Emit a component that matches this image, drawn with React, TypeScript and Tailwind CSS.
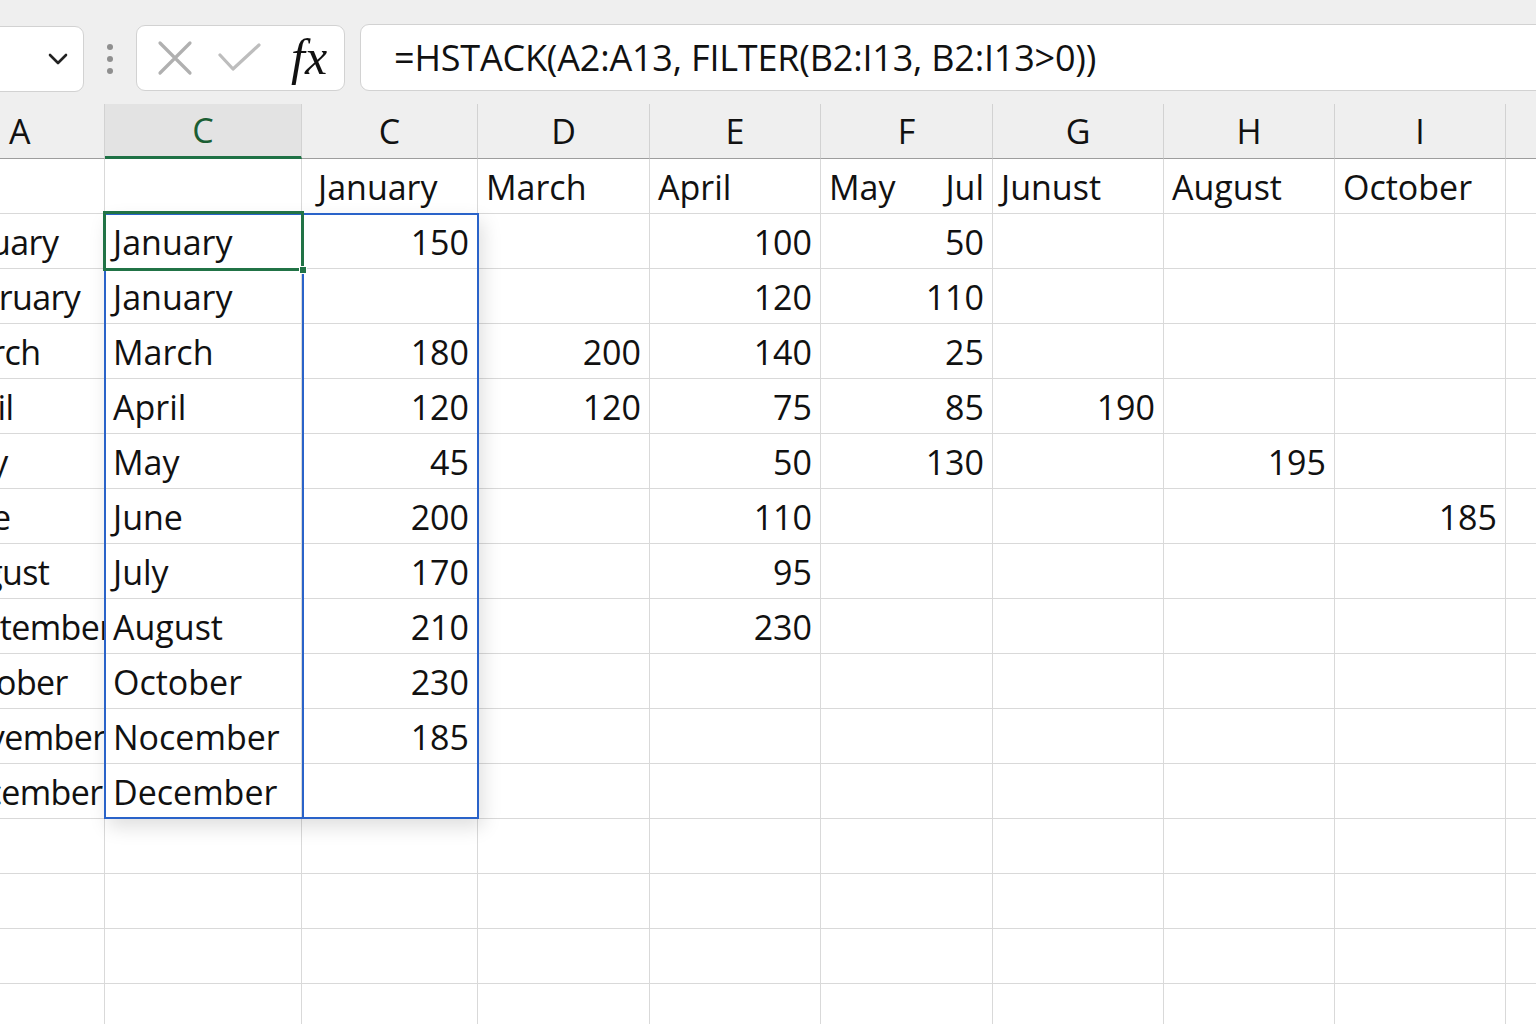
import React from "react";

// column layout: A is scrolled partly off-screen
const colWidths = "grid-cols-[169px_197px_176px_172px_171px_172px_171px_171px_171px_171px]";
const headers = ["A", "C", "C", "D", "E", "F", "G", "H", "I", ""];

const colA = ["", "January", "February", "March", "April", "May", "June", "August", "September", "October", "November", "December", "", "", "", ""];
const colC1 = ["", "January", "January", "March", "April", "May", "June", "July", "August", "October", "Nocember", "December", "", "", "", ""];

// values for columns C..I (index 0..6) per row, starting at row 2
const values: (number | null)[][] = [
  [150, null, 100, 50, null, null, null],
  [null, null, 120, 110, null, null, null],
  [180, 200, 140, 25, null, null, null],
  [120, 120, 75, 85, 190, null, null],
  [45, null, 50, 130, null, 195, null],
  [200, null, 110, null, null, null, 185],
  [170, null, 95, null, null, null, null],
  [210, null, 230, null, null, null, null],
  [230, null, null, null, null, null, null],
  [185, null, null, null, null, null, null],
  [null, null, null, null, null, null, null],
];

const row1 = ["January", "March", "April", "May", "Junust", "August", "October", ""];

const cell = "h-[55px] border-r border-b border-[#d9d9d9] overflow-hidden whitespace-nowrap flex items-center pt-[2px]";

function Toolbar() {
  return (
    <div className="h-[104px] bg-[#efefef] flex items-start pt-[24px] gap-0">
      {/* name box */}
      <div className="ml-[-16px] w-[100px] h-[66px] mt-[2px] bg-white border border-[#d2d2d2] rounded-[9px] flex items-center justify-end pr-[14px]">
        <svg width="22" height="14" viewBox="0 0 22 14">
          <path d="M3 3 L11 11 L19 3" fill="none" stroke="#222" strokeWidth="2.6" strokeLinecap="round" strokeLinejoin="round" />
        </svg>
      </div>
      <div className="w-[52px] h-[70px] flex flex-col items-center justify-center gap-[6px]">
        <span className="w-[6px] h-[6px] rounded-full bg-[#8f8f8f]" />
        <span className="w-[6px] h-[6px] rounded-full bg-[#8f8f8f]" />
        <span className="w-[6px] h-[6px] rounded-full bg-[#8f8f8f]" />
      </div>
      {/* cancel / enter / fx */}
      <div className="w-[209px] h-[66px] mt-[1px] bg-white border border-[#d2d2d2] rounded-[9px] flex items-center pl-[20px]">
        <svg width="36" height="36" viewBox="0 0 36 36">
          <path d="M3 3 L33 33 M33 3 L3 33" stroke="#b0b0b0" strokeWidth="3.2" strokeLinecap="round" />
        </svg>
        <svg width="46" height="32" viewBox="0 0 46 32" className="ml-[24px]">
          <path d="M3 13 L16 27 L42 3" fill="none" stroke="#bdbdbd" strokeWidth="3.2" strokeLinecap="round" strokeLinejoin="round" />
        </svg>
        <span className="ml-[28px] mb-[2px] font-['Liberation_Serif',serif] italic text-[50px] leading-none text-[#111]">fx</span>
      </div>
      {/* formula input */}
      <div className="ml-[15px] flex-1 mr-[-20px] h-[67px] bg-white border border-[#d2d2d2] rounded-[9px] flex items-center pl-[33px]">
        <span className="text-[36px] tracking-[-0.2px] text-[#111] leading-none">=HSTACK(A2:A13, FILTER(B2:I13, B2:I13&gt;0))</span>
      </div>
    </div>
  );
}

function HeaderRow() {
  return (
    <>
      {headers.map((h, i) => (
        <div
          key={i}
          className={
            i === 1
              ? "h-[55px] bg-[#e3e3e3] border-r border-[#d2d2d2] border-b-[3px] border-b-[#1e7145] flex items-center justify-center text-[#1b5e33] text-[34px]"
              : "h-[55px] bg-[#efefef] border-r border-[#d2d2d2] border-b border-b-[#9d9d9d] flex items-center justify-center text-[#111] text-[34px]"
          }
        >
          <span className={i === 0 ? "ml-[73px] mr-auto" : ""}>{h}</span>
        </div>
      ))}
    </>
  );
}

export default function App() {
  return (
    <div className="w-[1536px] h-[1024px] overflow-hidden bg-white font-['Open_Sans','Noto_Sans',sans-serif] text-[#111]">
      <Toolbar />
      <div className="relative">
        <div className={`grid ${colWidths} ml-[-64px] w-[1677px] text-[34px]`}>
          <HeaderRow />
          {Array.from({ length: 16 }).map((_, r) => (
            <React.Fragment key={r}>
              <div className={`${cell} pl-[7px] tracking-[-0.6px]`}>{colA[r]}</div>
              <div className={`${cell} pl-[8px]`}>{colC1[r]}</div>
              {r === 0
                ? row1.map((t, j) => (
                    <div key={j} className={`${cell} ${j === 0 ? "pl-[16px]" : "pl-[8px]"} ${j === 3 ? "justify-between pr-[8px]" : ""}`}>
                      {j === 3 ? (
                        <>
                          <span>May</span>
                          <span>Jul</span>
                        </>
                      ) : (
                        t
                      )}
                    </div>
                  ))
                : Array.from({ length: 8 }).map((__, j) => {
                    const v = j < 7 ? values[r - 1]?.[j] : null;
                    return (
                      <div key={j} className={`${cell} justify-end pr-[8px]`}>
                        {v ?? ""}
                      </div>
                    );
                  })}
            </React.Fragment>
          ))}
        </div>
        {/* spilled range outline */}
        <div className="absolute left-[104px] top-[109px] w-[375px] h-[606px] border-2 border-[#2a63c9] shadow-[4px_8px_18px_rgba(0,0,0,0.13)] pointer-events-none">
          <div className="absolute left-[196px] top-0 h-full w-[2px] bg-[#2a63c9]" />
        </div>
        {/* active cell */}
        <div className="absolute left-[103px] top-[107px] w-[201px] h-[60px] border-[3px] border-[#217346] pointer-events-none">
          <div className="absolute right-[-6px] bottom-[-6px] w-[8px] h-[8px] bg-[#217346] border border-white" />
        </div>
      </div>
    </div>
  );
}
